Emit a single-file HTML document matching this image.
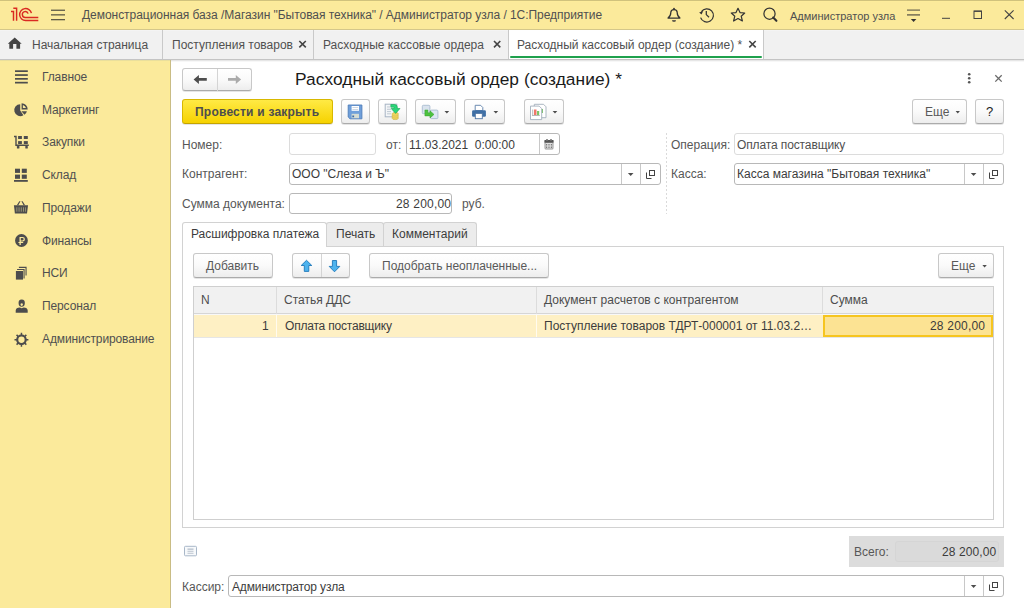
<!DOCTYPE html>
<html><head><meta charset="utf-8">
<style>
*{box-sizing:border-box;margin:0;padding:0}
html,body{width:1024px;height:608px;overflow:hidden;background:#fff;font-family:"Liberation Sans",sans-serif;font-size:12px;color:#3C3C3C}
.a{position:absolute}
.t{position:absolute;white-space:nowrap;line-height:14px}
.btn{position:absolute;border:1px solid #C8C8C8;border-bottom-color:#ABABAB;border-radius:3px;background:linear-gradient(#FFFFFF 0%,#FAFAFA 50%,#EDEDED 100%);box-shadow:0 1px 0 rgba(0,0,0,.10)}
.fld{position:absolute;border:1px solid #B8B8B8;border-radius:3px;background:#fff}
.fld.dis{border-color:#DCDCDC}
.lbl{color:#575757}
.side .t{color:#505050;left:42px;letter-spacing:-0.12px}
#ov{position:absolute;left:0;top:0}
</style></head><body>
<!-- backgrounds -->
<div class="a" style="left:0;top:0;width:1024px;height:30px;background:#FBEA9B;border-top:1px solid #D0C27C;border-bottom:1px solid #D4C78A"></div>
<div class="a" style="left:0;top:1px;width:1024px;height:1px;background:#FDEC9A"></div>
<div class="a" style="left:0;top:30px;width:1024px;height:30px;background:#F1F1F1;border-top:1px solid #F4F4F4;border-bottom:1px solid #C4C4C4"></div>
<div class="a" style="left:171px;top:60px;width:853px;height:1px;background:#E6E6E6"></div>
<div class="a" style="left:171px;top:61px;width:853px;height:1px;background:#F7F7F7"></div>
<div class="a" style="left:509px;top:30px;width:254px;height:29px;background:#fff"></div>
<div class="a" style="left:0;top:60px;width:171px;height:548px;background:#FBEA9B;border-right:1px solid #C9BC85"></div>
<div class="a" style="left:169px;top:60px;width:1px;height:548px;background:#FDEC96"></div>
<div class="a" style="left:0;top:60px;width:170px;height:1px;background:#EADF9C"></div>

<!-- top bar text -->
<div class="t" style="left:82px;top:8px;color:#505050;letter-spacing:-0.04px">Демонстрационная база /Магазин "Бытовая техника" / Администратор узла / 1С:Предприятие</div>
<div class="t" style="left:790px;top:9px;color:#505050;font-size:11px">Администратор узла</div>

<!-- tabs text -->
<div class="t" style="left:32px;top:38px;color:#505050">Начальная страница</div>
<div class="t" style="left:172px;top:38px;color:#505050">Поступления товаров</div>
<div class="t" style="left:323px;top:38px;color:#505050">Расходные кассовые ордера</div>
<div class="t" style="left:517px;top:38px;color:#505050">Расходный кассовый ордер (создание) *</div>

<!-- sidebar -->
<div class="side">
 <div class="t" style="top:70px">Главное</div>
 <div class="t" style="top:103px">Маркетинг</div>
 <div class="t" style="top:135px">Закупки</div>
 <div class="t" style="top:168px">Склад</div>
 <div class="t" style="top:201px">Продажи</div>
 <div class="t" style="top:234px">Финансы</div>
 <div class="t" style="top:266px">НСИ</div>
 <div class="t" style="top:299px">Персонал</div>
 <div class="t" style="top:332px;letter-spacing:-0.12px">Администрирование</div>
</div>

<!-- form header -->
<div class="btn" style="left:182px;top:68px;width:70px;height:23px"></div>
<div class="t" style="left:295px;top:69px;font-size:17.33px;line-height:20px;color:#1A1A1A;letter-spacing:0.05px">Расходный кассовый ордер (создание) *</div>

<div class="a" style="left:182px;top:99px;width:151px;height:25px;border:1px solid #D8B800;border-bottom-color:#C4A400;border-radius:3px;background:linear-gradient(#FFEA45,#F6D200);box-shadow:0 1px 0 rgba(0,0,0,.10)"></div>
<div class="t" style="left:195px;top:105px;font-weight:bold;color:#4D4D4D;letter-spacing:0.22px">Провести и закрыть</div>

<div class="btn" style="left:341px;top:99px;width:29px;height:25px"></div>
<div class="btn" style="left:378px;top:99px;width:29px;height:25px"></div>
<div class="btn" style="left:415px;top:99px;width:41px;height:25px"></div>
<div class="btn" style="left:464px;top:99px;width:41px;height:25px"></div>
<div class="btn" style="left:524px;top:99px;width:40px;height:25px"></div>
<div class="btn" style="left:912px;top:99px;width:55px;height:25px"></div>
<div class="t" style="left:925px;top:105px;color:#595959">Еще</div>
<div class="btn" style="left:975px;top:99px;width:29px;height:25px"></div>
<div class="t" style="left:986px;top:105px;color:#222;font-size:13px">?</div>

<!-- fields -->
<div class="t lbl" style="left:182px;top:138px">Номер:</div>
<div class="fld dis" style="left:289px;top:133px;width:87px;height:22px"></div>
<div class="t lbl" style="left:386px;top:138px">от:</div>
<div class="fld" style="left:406px;top:133px;width:154px;height:22px"></div>
<div class="t" style="left:409px;top:138px">11.03.2021&nbsp; 0:00:00</div>

<div class="t lbl" style="left:182px;top:167px">Контрагент:</div>
<div class="fld" style="left:289px;top:163px;width:372px;height:22px"></div>
<div class="t" style="left:292px;top:167px">ООО "Слеза и Ъ"</div>

<div class="t lbl" style="left:182px;top:197px">Сумма документа:</div>
<div class="fld" style="left:289px;top:193px;width:163px;height:21px"></div>
<div class="t" style="left:396px;top:197px;letter-spacing:0.2px">28 200,00</div>
<div class="t lbl" style="left:462px;top:197px">руб.</div>

<div class="t lbl" style="left:671px;top:138px">Операция:</div>
<div class="fld dis" style="left:734px;top:133px;width:270px;height:22px"></div>
<div class="t" style="left:737px;top:138px;color:#505050;letter-spacing:-0.12px">Оплата поставщику</div>
<div class="t lbl" style="left:671px;top:167px">Касса:</div>
<div class="fld" style="left:734px;top:163px;width:270px;height:22px"></div>
<div class="t" style="left:737px;top:167px">Касса магазина "Бытовая техника"</div>

<!-- tab panel -->
<div class="a" style="left:182px;top:246px;width:822px;height:282px;border:1px solid #D2D2D2"></div>
<div class="a" style="left:326px;top:222px;width:58px;height:24px;border:1px solid #D2D2D2;border-bottom:none;border-radius:3px 3px 0 0;background:#ECECEC"></div>
<div class="a" style="left:383px;top:222px;width:94px;height:24px;border:1px solid #D2D2D2;border-bottom:none;border-radius:3px 3px 0 0;background:#ECECEC"></div>
<div class="a" style="left:182px;top:222px;width:145px;height:25px;border:1px solid #D2D2D2;border-bottom:none;border-radius:3px 3px 0 0;background:#fff"></div>
<div class="t" style="left:191px;top:227px">Расшифровка платежа</div>
<div class="t" style="left:336px;top:227px">Печать</div>
<div class="t" style="left:392px;top:227px">Комментарий</div>

<div class="btn" style="left:193px;top:253px;width:80px;height:25px"></div>
<div class="t" style="left:206px;top:259px;color:#595959">Добавить</div>
<div class="btn" style="left:292px;top:253px;width:58px;height:25px"></div>
<div class="btn" style="left:369px;top:253px;width:180px;height:25px"></div>
<div class="t" style="left:382px;top:259px;color:#595959">Подобрать неоплаченные...</div>
<div class="btn" style="left:938px;top:253px;width:56px;height:25px"></div>
<div class="t" style="left:951px;top:259px;color:#595959">Еще</div>

<!-- table -->
<div class="a" style="left:193px;top:286px;width:801px;height:234px;border:1px solid #CFCFCF"></div>
<div class="a" style="left:194px;top:287px;width:799px;height:27px;background:#F1F1F1;border-bottom:1px solid #D6D6D6"></div>
<div class="a" style="left:276px;top:287px;width:1px;height:50px;background:#DCDCDC"></div>
<div class="a" style="left:536px;top:287px;width:1px;height:50px;background:#DCDCDC"></div>
<div class="a" style="left:822px;top:287px;width:1px;height:27px;background:#DCDCDC"></div>
<div class="t" style="left:201px;top:293px;color:#4D4D4D">N</div>
<div class="t" style="left:284px;top:293px;color:#4D4D4D">Статья ДДС</div>
<div class="t" style="left:544px;top:293px;color:#4D4D4D">Документ расчетов с контрагентом</div>
<div class="t" style="left:830px;top:293px;color:#4D4D4D">Сумма</div>
<div class="a" style="left:194px;top:314px;width:799px;height:24px;background:#FEF0C4;border-top:1px solid #F8F8F8;border-bottom:1px solid #E6E6E6"></div>
<div class="a" style="left:276px;top:315px;width:1px;height:22px;background:#FFFBEF"></div>
<div class="a" style="left:536px;top:315px;width:1px;height:22px;background:#FFFBEF"></div>
<div class="t" style="left:262px;top:319px">1</div>
<div class="t" style="left:285px;top:319px;letter-spacing:-0.2px">Оплата поставщику</div>
<div class="t" style="left:544px;top:319px">Поступление товаров ТДРТ-000001 от 11.03.2…</div>
<div class="a" style="left:823px;top:315px;width:170px;height:22px;background:#FCE393;border:2px solid #F6C51F"></div>
<div class="t" style="left:930px;top:319px;letter-spacing:0.2px">28 200,00</div>

<!-- footer -->
<div class="a" style="left:849px;top:536px;width:155px;height:31px;background:#DCDCDC"></div>
<div class="a" style="left:895px;top:541px;width:104px;height:21px;border:1px solid #D5D5D5;border-radius:3px;background:#DADADA"></div>
<div class="t lbl" style="left:854px;top:545px">Всего:</div>
<div class="t" style="left:942px;top:545px;letter-spacing:0.1px">28 200,00</div>
<div class="t lbl" style="left:182px;top:580px">Кассир:</div>
<div class="fld" style="left:228px;top:575px;width:776px;height:22px"></div>
<div class="t" style="left:232px;top:580px;letter-spacing:-0.13px">Администратор узла</div>

<!-- overlay icons & lines -->
<svg id="ov" width="1024" height="608" viewBox="0 0 1024 608">
 <!-- tab dividers -->
 <g fill="#C9C9C9">
  <rect x="162" y="30" width="1" height="29"/>
  <rect x="313" y="30" width="1" height="29"/>
  <rect x="508" y="30" width="1" height="29"/>
  <rect x="763" y="30" width="1" height="29"/>
 </g>
 <rect x="510" y="56" width="252" height="2" rx="1" fill="#1FA14D"/>

 <!-- 1C logo -->
 <g fill="none" stroke="#DA2A22" stroke-width="1.45" stroke-linecap="butt">
  <path d="M11 11.4 H13.5 V20.8"/>
  <path d="M13.3 8.3 H16.6 V20.8"/>
  <path d="M31.4 13.2 A5.95 5.95 0 1 0 25.7 20.45 H38.3"/>
  <path d="M28.1 13.6 A2.95 2.95 0 1 0 25.4 17.45 H38.3"/>
 </g>
 <!-- hamburger -->
 <g fill="#5E5A46">
  <rect x="51" y="9.6" width="14" height="1.3"/>
  <rect x="51" y="14.2" width="14" height="1.3"/>
  <rect x="51" y="19" width="14" height="1.3"/>
 </g>
 <!-- bell -->
 <g fill="none" stroke="#333" stroke-width="1.25">
  <path d="M668 18 C670.3 16.5 670.8 14.5 670.8 12.5 C670.8 10.6 672.2 9.6 674 9.6 C675.8 9.6 677.2 10.6 677.2 12.5 C677.2 14.5 677.7 16.5 680 18 Z" stroke-linejoin="round"/>
 </g>
 <circle cx="674" cy="8.6" r="0.9" fill="#333"/>
 <path d="M672 20.2 H676 A2 1.6 0 0 1 672 20.2 Z" fill="#333"/>
 <!-- history -->
 <g fill="none" stroke="#333" stroke-width="1.25">
  <path d="M701.4 11.6 A6.6 6.6 0 1 1 700.6 17.6"/>
  <path d="M706.3 11 V14.6 L709 17.3"/>
 </g>
 <path d="M699.2 12.4 L703.2 11.1 L701.5 14.6 Z" fill="#333"/>
 <!-- star -->
 <path d="M738 8.3 L740 12.6 L744.7 13 L741.2 16.2 L742.4 21 L738 18.5 L733.6 21 L734.8 16.2 L731.3 13 L736 12.6 Z" fill="none" stroke="#333" stroke-width="1.2" stroke-linejoin="round"/>
 <!-- search -->
 <circle cx="769.5" cy="13.7" r="5.6" fill="none" stroke="#333" stroke-width="1.25"/>
 <path d="M773.2 17.6 L776.4 20.8" stroke="#333" stroke-width="2.1" stroke-linecap="round"/>
 <!-- filter -->
 <g fill="#6A6550">
  <rect x="907" y="9.5" width="13" height="1.2"/>
  <rect x="907" y="14.2" width="13" height="1.4"/>
 </g>
 <path d="M910.8 19 H916.4 L913.6 22 Z" fill="#333"/>
 <!-- window controls -->
 <rect x="942" y="17.8" width="8" height="1" fill="#444"/>
 <rect x="974" y="11" width="7.5" height="7.5" fill="none" stroke="#444" stroke-width="1"/>
 <rect x="974" y="10.8" width="7.5" height="1.1" fill="#444"/>
 <path d="M1004.8 10.3 L1013.6 19 M1013.6 10.3 L1004.8 19" stroke="#444" stroke-width="1.1"/>

 <!-- home -->
 <path d="M14.7 37.6 L21.7 43.7 H20.1 V48.7 H16.4 V44 H13.1 V48.7 H9.3 V43.7 H7.8 Z" fill="#454545"/>
 <!-- tab close -->
 <g stroke="#454545" stroke-width="1.6">
  <path d="M299.3 41 L305.8 47.4 M305.8 41 L299.3 47.4"/>
  <path d="M494 41 L500.3 47.4 M500.3 41 L494 47.4"/>
  <path d="M749.3 41 L755.7 47.4 M755.7 41 L749.3 47.4"/>
 </g>

 <!-- sidebar icons -->
 <g fill="#4D4D4D">
  <!-- Главное -->
  <rect x="15" y="70.3" width="12.8" height="1.7"/>
  <rect x="15" y="74.2" width="12.8" height="1.7"/>
  <rect x="15" y="78" width="12.8" height="1.7"/>
  <rect x="15" y="81.8" width="12.8" height="1.7"/>
  <!-- Маркетинг -->
  <path d="M20.2 104.2 V110.6 L23.4 115.3 A6 6 0 1 1 20.2 104.2 Z"/>
  <path d="M21.4 111.2 L26.9 111.2 A6 6 0 0 1 24.5 114.8 Z"/>
  <path d="M21.6 103.3 V109.4 H27.7 A6.1 6.1 0 0 0 21.6 103.3 Z M22.9 105 A4.6 4.6 0 0 1 26 108.1 H22.9 Z" fill-rule="evenodd"/>
  <!-- Закупки -->
  <path d="M14 135.8 H16.7 V144.5 H28.8 V145.9 H15.3 V137.2 H14 Z"/>
  <rect x="18.1" y="136" width="3.8" height="3"/>
  <rect x="23.8" y="136" width="4" height="3"/>
  <rect x="18.1" y="141.1" width="3.8" height="2.9"/>
  <rect x="23.8" y="141.1" width="4" height="2.9"/>
  <rect x="16.9" y="146" width="2.5" height="2.6" rx="0.6"/>
  <rect x="25.3" y="146" width="2.5" height="2.6" rx="0.6"/>
  <!-- Склад -->
  <rect x="15" y="168.7" width="5" height="4.2"/>
  <rect x="21.8" y="168.7" width="5" height="4.2"/>
  <rect x="15" y="174.6" width="5" height="4.2"/>
  <rect x="21.8" y="174.6" width="5" height="4.2"/>
  <rect x="14" y="180" width="13.8" height="1.8"/>
  <!-- Продажи -->
  <path d="M13.9 205.2 H28 L27 213.4 H14.9 Z"/>
  <g fill="#A29D78"><rect x="16.4" y="207.3" width="0.9" height="4.4"/><rect x="18.6" y="207.3" width="0.9" height="4.4"/><rect x="20.8" y="207.3" width="0.9" height="4.4"/><rect x="23" y="207.3" width="0.9" height="4.4"/><rect x="25" y="207.3" width="0.8" height="4.4"/></g>
  <path d="M16.8 205.3 L19.3 201.2 H20.5 L18.3 205.3 Z M25.1 205.3 L22.6 201.2 H21.4 L23.6 205.3 Z"/>
  <!-- Финансы -->
  <path d="M21.45 234.1 A6.4 6.4 0 1 1 21.45 246.9 A6.4 6.4 0 1 1 21.45 234.1 Z M19.5 237 V241.9 H18.4 V243 H19.5 V245 H20.8 V243 H23.2 V241.9 H20.8 V241.5 H22.6 A2.3 2.25 0 0 0 22.6 237 Z M20.8 238.1 H22.5 A1.15 1.15 0 0 1 22.5 240.4 H20.8 Z" fill-rule="evenodd"/>
  <!-- НСИ -->
  <rect x="15.9" y="271" width="7.1" height="8.6"/>
  <path d="M17.1 269 H24.6 V278.6 H23.5 V270.1 H17.1 Z"/>
  <path d="M18.9 266.8 H26.6 V275.6 H25.5 V267.9 H18.9 Z"/>
  <!-- Персонал -->
  <path d="M18.6 303.5 Q18.2 299.6 21.7 299.6 Q25.2 299.6 24.8 303.5 Q24.6 306.8 21.7 306.8 Q18.8 306.8 18.6 303.5 Z M20.4 304.1 Q20.6 305.9 21.7 306 Q22.8 305.9 23 304.1 Q22.4 303.3 21.7 303.2 Q21 303.3 20.4 304.1 Z" fill-rule="evenodd"/>
  <path d="M15.7 312.8 V310.4 Q15.9 307.6 19.8 307.5 L21.7 308.3 L23.6 307.5 Q27.5 307.6 27.7 310.4 V312.8 Z"/>
  <!-- Администрирование -->
  <path d="M20.7 332.8 H22.2 V334.5 A4.7 4.7 0 0 1 24.6 335.5 L25.8 334.3 L26.9 335.4 L25.7 336.6 A4.7 4.7 0 0 1 26.7 339 H28.4 V340.5 H26.7 A4.7 4.7 0 0 1 25.7 342.9 L26.9 344.1 L25.8 345.2 L24.6 344 A4.7 4.7 0 0 1 22.2 345 V346.7 H20.7 V345 A4.7 4.7 0 0 1 18.3 344 L17.1 345.2 L16 344.1 L17.2 342.9 A4.7 4.7 0 0 1 16.2 340.5 H14.5 V339 H16.2 A4.7 4.7 0 0 1 17.2 336.6 L16 335.4 L17.1 334.3 L18.3 335.5 A4.7 4.7 0 0 1 20.7 334.5 Z M21.45 336.6 A3.15 3.15 0 1 0 21.45 342.9 A3.15 3.15 0 1 0 21.45 336.6 Z" fill-rule="evenodd"/>
 </g>

 <!-- nav buttons -->
 <rect x="217" y="69" width="1" height="22" fill="#D4D4D4"/>
 <path d="M193.6 79.4 L198.9 74.9 V78.1 H206.8 V80.8 H198.9 V84 Z" fill="#4D4D4D"/>
 <path d="M241.1 79.4 L235.8 74.9 V78.1 H228 V80.8 H235.8 V84 Z" fill="#ABABAB"/>

 <!-- right top -->
 <g fill="#555">
  <circle cx="969.2" cy="74.2" r="1.3"/>
  <circle cx="969.2" cy="78.2" r="1.3"/>
  <circle cx="969.2" cy="82.2" r="1.3"/>
 </g>
 <path d="M995.3 75.2 L1001.7 81.6 M1001.7 75.2 L995.3 81.6" stroke="#6A6A6A" stroke-width="1.3"/>

 <!-- dropdown arrows -->
 <g fill="#4D4D4D">
  <path d="M444.5 111 H449.2 L446.85 113.6 Z"/>
  <path d="M493.5 111 H498.2 L495.85 113.6 Z"/>
  <path d="M552.6 111 H557.3 L554.95 113.6 Z"/>
  <path d="M955.6 111 H959.9 L957.75 113.4 Z"/>
  <path d="M982.4 265 H986.8 L984.6 267.5 Z"/>
  <path d="M627.9 173 H633.5 L630.7 176 Z"/>
  <path d="M970.8 173 H976.4 L973.6 176 Z"/>
  <path d="M970.8 585 H976.4 L973.6 588 Z"/>
 </g>
 <!-- field dividers -->
 <g fill="#C8C8C8">
  <rect x="539" y="134" width="1" height="20"/>
  <rect x="621" y="164" width="1" height="20"/>
  <rect x="640" y="164" width="1" height="20"/>
  <rect x="964" y="164" width="1" height="20"/>
  <rect x="983" y="164" width="1" height="20"/>
  <rect x="964" y="576" width="1" height="20"/>
  <rect x="983" y="576" width="1" height="20"/>
 </g>
 <!-- open icons -->
 <g fill="none" stroke="#444" stroke-width="1">
  <path d="M646.5 172.5 V178.5 H651.5"/>
  <rect x="649.5" y="170.5" width="5" height="5"/>
  <path d="M989.5 172.5 V178.5 H994.5"/>
  <rect x="992.5" y="170.5" width="5" height="5"/>
  <path d="M989.5 584.5 V590.5 H994.5"/>
  <rect x="992.5" y="582.5" width="5" height="5"/>
 </g>
 <!-- calendar -->
 <rect x="544.5" y="140" width="9" height="9.5" rx="1.5" fill="#9A9A9A"/>
 <rect x="545.5" y="143" width="7" height="5.5" fill="#E0E0E0"/>
 <rect x="544.5" y="140" width="9" height="2.6" fill="#555"/>
 <rect x="546.2" y="139" width="1.6" height="2" fill="#777"/>
 <rect x="550.2" y="139" width="1.6" height="2" fill="#777"/>
 <g fill="#666"><rect x="546" y="144.2" width="1.2" height="1.2"/><rect x="548.4" y="144.2" width="1.2" height="1.2"/><rect x="550.8" y="144.2" width="1.2" height="1.2"/><rect x="546" y="146.6" width="1.2" height="1.2"/><rect x="548.4" y="146.6" width="1.2" height="1.2"/><rect x="550.8" y="146.6" width="1.2" height="1.2"/></g>

 <!-- dotted separator -->
 <line x1="666.5" y1="133" x2="666.5" y2="214" stroke="#DADADA" stroke-width="1" stroke-dasharray="2 2"/>

 <!-- save icon -->
 <path d="M348.2 105 H361.9 V118.8 H350 L348.2 117 Z" fill="#6F9FDA" stroke="#4E7DB9" stroke-width="0.9"/>
 <rect x="351.6" y="106" width="7.4" height="4.8" fill="#FFFFFF"/>
 <rect x="352.4" y="107.3" width="5.8" height="0.7" fill="#B9C7D8"/>
 <rect x="352.4" y="109" width="5.8" height="0.7" fill="#B9C7D8"/>
 <rect x="351.6" y="113.8" width="7.4" height="4.4" fill="#D5DCD3"/>
 <rect x="352.3" y="115.5" width="1.8" height="1.8" fill="#3D6AA6"/>

 <!-- post icon -->
 <rect x="385.2" y="104.2" width="11.6" height="12.6" fill="#F4F6F8" stroke="#A7B4C4" stroke-width="1"/>
 <g fill="#B8C2CE"><rect x="387" y="106.5" width="3" height="0.9"/><rect x="387" y="108.8" width="4" height="0.9"/><rect x="387" y="111.2" width="4" height="0.9"/><rect x="387" y="113.4" width="4" height="0.9"/></g>
 <path d="M392.2 113.6 Q392.2 112.6 395.2 112.6 Q398.2 112.6 398.2 113.6 V118.5 Q398.2 119.6 395.2 119.6 Q392.2 119.6 392.2 118.5 Z" fill="#EDD460" stroke="#CFAE3A" stroke-width="0.6"/>
 <path d="M392.6 115.6 Q395.2 116.6 397.8 115.6 M392.6 117.6 Q395.2 118.6 397.8 117.6" fill="none" stroke="#D8B845" stroke-width="0.5"/>
 <path d="M390.8 104.5 H394.5 Q397.3 104.6 397.3 107.3 V108.5 H400 L395.6 113.4 L391.2 108.5 H394 V107.5 Q394 107.2 393.6 107.2 H390.8 Z" fill="#2BD67A" stroke="#12A650" stroke-width="0.6"/>

 <!-- transfer icon -->
 <rect x="422.3" y="105.3" width="7.6" height="8.4" rx="1" fill="#D9E3EE" stroke="#A9BCD0" stroke-width="0.9"/>
 <rect x="430.4" y="110.1" width="7.5" height="8.5" rx="1" fill="#DDE7F2" stroke="#A9BCD0" stroke-width="0.9"/>
 <path d="M424.9 110 H427.9 V112.8 H430 V110.8 L434 114.4 L430 118 V115.9 H424.9 Z" fill="#4CC23F" stroke="#36A12C" stroke-width="0.5"/>

 <!-- printer -->
 <path d="M475.2 105.3 H480.6 L482.8 107.5 V110.5 H475.2 Z" fill="#FFFFFF" stroke="#5B7EA8" stroke-width="0.9"/>
 <rect x="472.1" y="110.3" width="13.8" height="6.5" rx="1.2" fill="#3F6FA5"/>
 <rect x="475.3" y="113.4" width="7" height="5.3" fill="#FFFFFF" stroke="#4F76A5" stroke-width="0.9"/>

 <!-- report icon -->
 <path d="M534.3 104.3 H543.5 L546 106.8 V117.7 H534.3 Z" fill="#FFFFFF" stroke="#A3AFBB" stroke-width="0.9"/>
 <rect x="541.2" y="109" width="1.8" height="4" fill="#7CC56A"/>
 <path d="M530.5 106.1 H539.2 L541.7 108.6 V119.6 H530.5 Z" fill="#FFFFFF" stroke="#A3AFBB" stroke-width="0.9"/>
 <rect x="532.2" y="109.5" width="1" height="5.5" fill="#BBBBBB"/>
 <rect x="534" y="109.5" width="2.5" height="5.5" fill="#F0786A"/>
 <rect x="537" y="111" width="2.2" height="4" fill="#7CC56A"/>
 <rect x="532" y="115.2" width="7.8" height="0.7" fill="#999"/>

 <!-- up/down -->
 <rect x="321" y="254" width="1" height="23" fill="#D4D4D4"/>
 <path d="M306.5 260.3 L311.8 265.5 H308.8 V271.4 H304.3 V265.5 H301.2 Z" fill="#4DB3EE" stroke="#1F78B9" stroke-width="0.9" stroke-linejoin="round"/>
 <path d="M334.5 271.8 L339.8 266.4 H336.6 V260.5 H332.4 V266.4 H329.2 Z" fill="#4DB3EE" stroke="#1F78B9" stroke-width="0.9" stroke-linejoin="round"/>

 <!-- comment icon -->
 <rect x="184.5" y="546.3" width="12" height="9.5" rx="1" fill="#F7F9FB" stroke="#A8B7C8" stroke-width="1"/>
 <g fill="#B5BFCB"><rect x="187.5" y="548.5" width="6" height="1.3"/><rect x="187.5" y="550.8" width="6" height="0.9"/><rect x="187.5" y="552.8" width="6" height="0.9"/></g>
</svg>
</body></html>
